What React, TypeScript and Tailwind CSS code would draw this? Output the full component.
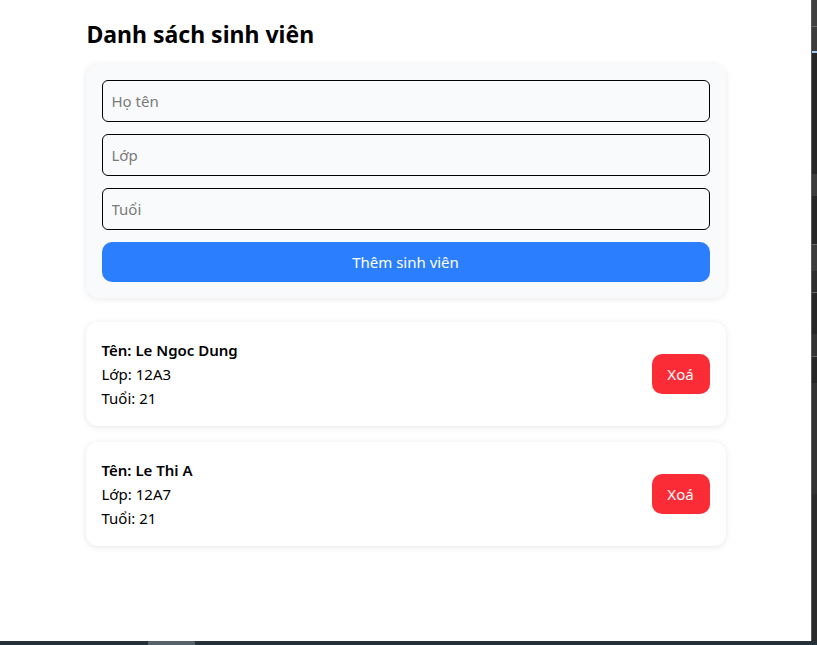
import { useState } from 'react';

type Student = { id: number; name: string; lop: string; age: number };

const initial: Student[] = [
  { id: 1, name: 'Le Ngoc Dung', lop: '12A3', age: 21 },
  { id: 2, name: 'Le Thi A', lop: '12A7', age: 21 },
];

export default function App() {
  const [students, setStudents] = useState<Student[]>(initial);
  const [name, setName] = useState('');
  const [lop, setLop] = useState('');
  const [age, setAge] = useState('');

  const addStudent = () => {
    if (!name || !lop || !age) return;
    setStudents((prev) => [...prev, { id: Date.now(), name, lop, age: Number(age) }]);
    setName('');
    setLop('');
    setAge('');
  };

  return (
    <div className="flex h-screen flex-col bg-white font-['Noto_Sans',sans-serif] text-black">
      <div className="flex min-h-0 flex-1">
        <main className="flex-1 overflow-hidden bg-white">
          <div className="mx-auto w-[640px] pt-[19px]">
            <h2 className="mb-[15px] pl-px text-[23px] font-bold leading-[30px]">Danh sách sinh viên</h2>

            <div className="flex flex-col gap-3 rounded-xl bg-gray-50 p-4 shadow-[0_1px_6px_rgba(0,0,0,0.09)]">
              <input
                value={name}
                onChange={(e) => setName(e.target.value)}
                placeholder="Họ tên"
                className="h-[42px] rounded-md border border-black bg-gray-50 px-[9px] text-[15px] outline-none placeholder:text-[#7a7a7a]"
              />
              <input
                value={lop}
                onChange={(e) => setLop(e.target.value)}
                placeholder="Lớp"
                className="h-[42px] rounded-md border border-black bg-gray-50 px-[9px] text-[15px] outline-none placeholder:text-[#7a7a7a]"
              />
              <input
                value={age}
                onChange={(e) => setAge(e.target.value)}
                placeholder="Tuổi"
                className="h-[42px] rounded-md border border-black bg-gray-50 px-[9px] text-[15px] outline-none placeholder:text-[#7a7a7a]"
              />
              <button
                onClick={addStudent}
                className="h-10 rounded-[10px] bg-blue-500 text-[15px] text-white"
              >
                Thêm sinh viên
              </button>
            </div>

            <div className="mt-6 flex flex-col gap-4">
              {students.map((s) => (
                <div
                  key={s.id}
                  className="flex items-center justify-between rounded-xl bg-white p-4 shadow-[0_1px_6px_rgba(0,0,0,0.1)]"
                >
                  <div className="text-[15px] leading-6">
                    <p className="font-semibold">Tên: {s.name}</p>
                    <p>Lớp: {s.lop}</p>
                    <p>Tuổi: {s.age}</p>
                  </div>
                  <button
                    onClick={() => setStudents((prev) => prev.filter((x) => x.id !== s.id))}
                    className="h-10 w-[58px] rounded-[10px] bg-red-500 text-[15px] text-white"
                  >
                    Xoá
                  </button>
                </div>
              ))}
            </div>
          </div>
        </main>

        {/* devtools edge */}
        <div className="flex w-[6px] flex-col border-l border-[#5a5a5a] bg-[#262626]">
          <div className="h-[26px] bg-[#404040]" />
          <div className="h-px bg-[#6a6a6a]" />
          <div className="h-[24px] bg-[#3c3c3c]" />
          <div className="h-[2px] bg-[#a8c7fa]" />
          <div className="h-[121px]" />
          <div className="h-[22px] bg-[#3c3c3c]" />
          <div className="h-[48px]" />
          <div className="h-px bg-[#6a6a6a]" />
          <div className="h-[26px] bg-[#3c3c3c]" />
          <div className="h-[21px] bg-[#2e2e2e]" />
          <div className="h-px bg-[#6a6a6a]" />
          <div className="h-[41px]" />
          <div className="h-[22px] bg-[#333333]" />
          <div className="h-px bg-[#6a6a6a]" />
          <div className="h-[26px]" />
          <div className="h-[111px] bg-[#333333]" />
          <div className="flex-1 bg-[#2b2b2b]" />
        </div>
      </div>

      <div className="flex h-[4px] bg-[#243238]">
        <div className="w-[148px]" />
        <div className="w-[47px] bg-[#56626a]" />
      </div>
    </div>
  );
}
